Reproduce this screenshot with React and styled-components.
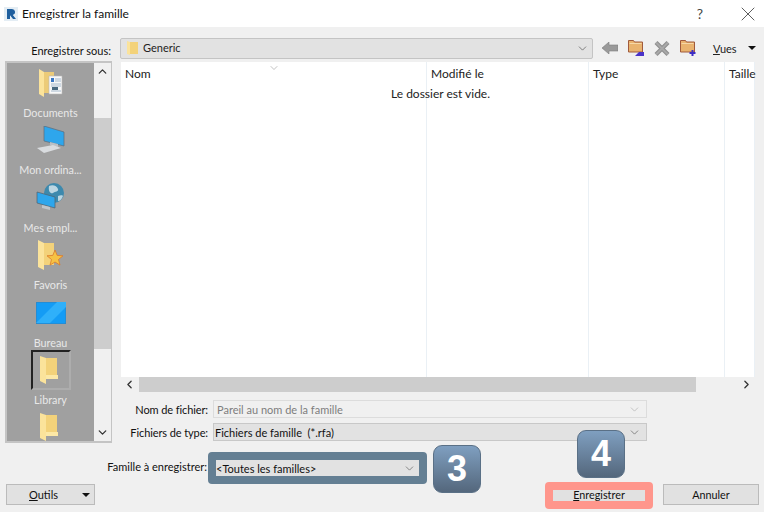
import React from 'react';
import styled, { createGlobalStyle } from 'styled-components';
import { ChevronDown, ChevronUp, ChevronLeft, ChevronRight, X } from 'lucide-react';

const GlobalStyle = createGlobalStyle`
  html, body {
    margin: 0;
    padding: 0;
    width: 764px;
    height: 512px;
    overflow: hidden;
    background: #f0f0f0;
  }
  * {
    box-sizing: border-box;
  }
`;
const Dialog = styled.div`
  position: relative;
  width: 764px;
  height: 512px;
  overflow: hidden;
  background: #f0f0f0;
  color: #111;
  font-family: 'Lato', 'Liberation Sans', sans-serif;
  font-size: 11px;
`;
const TitleBar = styled.div`
  display: flex;
  align-items: center;
  height: 27px;
  padding: 0 4px 0 4px;
  background: #fff;
  font-size: 12px;
`;
const TitleText = styled.div`
  margin-left: 4px;
  flex: 1;
`;
const HelpMark = styled.div`
  width: 14px;
  margin-right: 29px;
  color: #444;
  font-size: 14px;
  text-align: center;
`;
const ToolRow = styled.div`
  display: flex;
  align-items: center;
  height: 34px;
  padding-top: 8px;
`;
const SaveLabel = styled.div`
  width: 111px;
  padding-top: 4px;
  text-align: right;
`;
const PathCombo = styled.div`
  display: flex;
  align-items: center;
  width: 473px;
  height: 21px;
  margin-left: 9px;
  padding: 0 3px 0 6px;
  background: #e2e2e2;
  border: 1px solid #c4c4c4;
  border-radius: 2px;
  > span {
    flex: 1;
    margin-left: 5px;
    margin-top: -2px;
    color: #222;
  }
`;
const ToolIcons = styled.div`
  display: flex;
  align-items: center;
  gap: 10px;
  margin-left: 9px;
`;
const ViewsButton = styled.div`
  margin-left: 17px;
  width: 22px;
  color: #222;
`;
const Key = styled.span`
  text-decoration: underline;
`;
const MenuArrow = styled.div`
  width: 0;
  height: 0;
  margin-left: ${(p) => p.$left || 0}px;
  border-left: 4px solid transparent;
  border-right: 4px solid transparent;
  border-top: 4px solid #111;
`;
const Middle = styled.div`
  display: flex;
  height: 384px;
  padding-left: 5px;
`;
const Sidebar = styled.div`
  display: flex;
  width: 107px;
  height: 382px;
  border: 2px solid #c4c4c4;
  border-right-width: 1px;
  background: #f0f0f0;
`;
const Places = styled.div`
  flex: 1;
  height: 100%;
  overflow: hidden;
  background: #a0a0a0;
`;
const Place = styled.div`
  display: flex;
  flex-direction: column;
  align-items: center;
  height: 57.4px;
  padding-top: ${(p) => p.$top || 5}px;
  color: #e8e8e8;
  font-size: 10.8px;
  > span {
    margin-top: ${(p) => p.$gap || 8}px;
    line-height: 14px;
    white-space: nowrap;
  }
`;
const IconSlot = styled.div`
  display: flex;
  align-items: center;
  justify-content: center;
  width: 40px;
  height: 30px;
  flex: none;
`;
const SelectedSlot = styled(IconSlot)`
  height: 40px;
  margin-top: -4px;
  padding-right: 4px;
  border: 2px solid #adadad;
  border-top-color: #222;
  border-left-color: #222;
`;
const LastSlot = styled(IconSlot)`
  padding-right: 4px;
`;
const VScroll = styled.div`
  display: flex;
  flex-direction: column;
  width: 17px;
  background: #f0f0f0;
`;
const ScrollButton = styled.div`
  display: flex;
  align-items: center;
  justify-content: center;
  flex: none;
  width: 17px;
  height: 17px;
  color: #333;
`;
const VThumb = styled.div`
  height: 231px;
  margin-top: 38px;
  background: #cdcdcd;
`;
const Spring = styled.div`
  flex: 1;
`;
const RightPane = styled.div`
  width: 634px;
  margin-left: 9px;
  padding-top: 1px;
`;
const ListView = styled.div`
  position: relative;
  display: flex;
  height: 315px;
  background: #fff;
  font-size: 12px;
`;
const Column = styled.div`
  width: ${(p) => p.$width}px;
  padding: 4px 4px;
  border-right: 1px solid #eaf0f5;
  color: #222;
  white-space: nowrap;
  &:last-of-type {
    border-right: 0;
  }
`;
const SortMark = styled.div`
  position: absolute;
  left: 147px;
  top: 0;
  color: #999;
  line-height: 0;
`;
const EmptyNote = styled.div`
  position: absolute;
  left: 270px;
  top: 24px;
  color: #222;
`;
const HScroll = styled.div`
  display: flex;
  align-items: center;
  height: 15px;
  background: #f0f0f0;
`;
const HThumb = styled.div`
  width: 557px;
  height: 15px;
  margin-left: 1px;
  background: #cdcdcd;
`;
const Fields = styled.div`
  display: flex;
  flex-direction: column;
  gap: 5px;
  margin-top: 8px;
`;
const FieldRow = styled.div`
  display: flex;
  align-items: center;
  height: 18px;
`;
const FieldLabel = styled.div`
  width: 92px;
  padding-right: 5px;
  letter-spacing: -0.1px;
  text-align: right;
  white-space: nowrap;
`;
const FieldBox = styled.div`
  display: flex;
  align-items: center;
  justify-content: space-between;
  width: 434px;
  height: 18px;
  padding: 0 5px 0 ${(p) => (p.$disabled ? 3 : 1)}px;
  border: 1px solid ${(p) => (p.$disabled ? '#dcdcdc' : '#c8c8c8')};
  background: ${(p) => (p.$disabled ? '#f0f0f0' : '#e2e2e2')};
  color: ${(p) => (p.$disabled ? '#7d7d7d' : '#111')};
`;
const Footer = styled.div`
  position: relative;
  display: flex;
  height: 67px;
`;
const OutilsButton = styled.div`
  display: flex;
  align-items: center;
  width: 89px;
  height: 21px;
  margin: 39px 0 0 6px;
  padding-left: 22px;
  background: #e1e1e1;
  border: 1px solid #bbb;
  > span {
    flex: 1;
  }
  > div {
    margin-right: 4px;
  }
`;
const FamilyLabel = styled.div`
  width: 113px;
  padding-top: 15px;
  padding-right: 1px;
  text-align: right;
`;
const FamilyHighlight = styled.div`
  display: flex;
  width: 219px;
  height: 32px;
  margin: 7px 0 0 0;
  padding: 8px;
  background: #647f93;
  border-radius: 4px;
`;
const FamilyCombo = styled.div`
  display: flex;
  align-items: center;
  justify-content: space-between;
  width: 100%;
  height: 16px;
  padding-right: 3px;
  background: #e2e2e2;
`;
const SaveHighlight = styled.div`
  display: flex;
  width: 108px;
  height: 27px;
  margin: 37px 0 0 118px;
  padding: 8px;
  background: #ff968c;
  border-radius: 4px;
`;
const SaveButton = styled.div`
  width: 100%;
  height: 11px;
  background: #e1e1e1;
  font-size: 10.8px;
  line-height: 9px;
  text-align: center;
`;
const CancelButton = styled.div`
  width: 96px;
  height: 21px;
  margin: 39px 0 0 10px;
  background: #e1e1e1;
  border: 1px solid #bbb;
  font-size: 10.8px;
  line-height: 19px;
  text-align: center;
`;
const StepBadge = styled.div`
  position: absolute;
  left: ${(p) => p.$left}px;
  top: ${(p) => p.$top}px;
  width: 48px;
  height: 48px;
  border-radius: 9px;
  background: linear-gradient(#7f9fc0, #54677c);
  border: 1px solid #5a7086;
  color: #fff;
  font-family: 'Liberation Sans', sans-serif;
  font-size: 36px;
  font-weight: 700;
  line-height: 46px;
  text-align: center;
`;

function RevitLogo() {
  return (
    <svg width="14" height="14" viewBox="0 0 14 14">
      <rect width="14" height="14" fill="#e4edf4" />
      <path d="M3 12V2h5a3 3 0 0 1 .8 5.900L12 12H9L6 8.200V12z" fill="#1f5f9e" />
    </svg>
  );
}
function Folder() {
  return (
    <svg width="18" height="28" viewBox="0 0 18 28">
      <path d="M4 2h13v21H4z" fill="#f3d27a" />
      <path d="M0 0l6 2v26l-6-3z" fill="#fbe39b" />
      <path d="M6 19h12v4H6z" fill="#fce8a6" />
    </svg>
  );
}
function DocFolder() {
  return (
    <svg width="24" height="28" viewBox="0 0 24 28">
      <path d="M2 3h13v21H2z" fill="#eccb78" />
      <path d="M0 0l5 3v25l-5-3z" fill="#fbe39b" />
      <path d="M10 7h13v18H10z" fill="#f8f8f8" stroke="#bbb" strokeWidth=".6" />
      <path d="M12 9h3v4h-3z" fill="#3b78c4" />
      <path d="M16 10h6M16 12h6M12 15h10M12 17h10M12 22h10" stroke="#8fa8c0" strokeWidth=".8" />
      <path d="M13 18h6v3h-6z" fill="#4a6a80" />
    </svg>
  );
}
function Computer() {
  return (
    <svg width="30" height="28" viewBox="0 0 30 28">
      <path d="M8 0l20 6v14L8 15z" fill="#2ea6ec" stroke="#5d6b78" strokeWidth=".7" />
      <path d="M14 16l8 2v3l-8-2z" fill="#b9c0c6" />
      <path d="M1 22l16-3 8 3-17 5z" fill="#d9dcdf" />
    </svg>
  );
}
function NetworkComputer() {
  return (
    <svg width="30" height="30" viewBox="0 0 30 30">
      <circle cx="18" cy="10" r="10" fill="#3d89ad" />
      <path d="M13 3c4-2 8 0 9 3 1 3-3 2-5 4-2 1-5-1-4-7zM22 13c2-1 5-1 5 0-1 3-3 5-5 5z" fill="#bcd6e2" />
      <path d="M1 9l18 5v11L1 20z" fill="#2ea6ec" stroke="#52606c" strokeWidth=".7" />
      <path d="M6 22l8 2v3l-8-2z" fill="#c0c5ca" />
    </svg>
  );
}
function StarFolder() {
  return (
    <svg width="26" height="30" viewBox="0 0 26 30">
      <path d="M3 3h13v22H3z" fill="#f3d27a" />
      <path d="M0 0l6 3v27l-6-3z" fill="#fbe39b" />
      <path d="M17 10l2.200 5.400 5.800.4-4.500 3.700 1.500 5.600-5-3.100-5 3.100 1.500-5.600L9 15.800l5.800-.4z" fill="#f6c244" stroke="#dc7a28" strokeWidth=".8" />
    </svg>
  );
}
function Desktop() {
  return (
    <svg width="30" height="22" viewBox="0 0 30 22">
      <rect width="30" height="22" rx="1" fill="#149cf5" stroke="#3a78a8" strokeWidth=".8" />
      <path d="M0 21L21 0h9v5L14 21z" fill="#2fb0fa" />
    </svg>
  );
}
function SmallFolder() {
  return (
    <svg width="11" height="14" viewBox="0 0 11 14">
      <path d="M3 1h8v12H3z" fill="#f3d27a" />
      <path d="M0 0l3 1v13l-3-1z" fill="#fbe39b" />
    </svg>
  );
}
function BackArrow() {
  return (
    <svg width="16" height="12" viewBox="0 0 16 12">
      <path d="M7 0v3h9v6H7v3L0 6z" fill="#9a9a9a" stroke="#7c7c7c" strokeWidth=".6" />
    </svg>
  );
}
function ActionFolder({ kind }) {
  return (
    <svg width="16" height="16" viewBox="0 0 16 16">
      <path d="M.5.5h5l1 1.500h8v10H.5z" fill="#e9b36f" stroke="#a05a3c" />
      <path d="M1.500 3.500h12" stroke="#f6d8a8" />
      {kind === 'up' ? (
        <path d="M7 16l4-4h5v4z" fill="#4a32c8" />
      ) : (
        <path d="M12.500 10v6M9.500 13h6" stroke="#3c2cc4" strokeWidth="2" />
      )}
    </svg>
  );
}
function DeleteCross() {
  return (
    <svg width="16" height="15" viewBox="0 0 16 15">
      <path d="M2 1.500l12 12M14 1.500l-12 12" stroke="#8e8e8e" strokeWidth="4.200" />
      <path d="M2 1.500l12 12M14 1.500l-12 12" stroke="#a8a8a8" strokeWidth="2" />
    </svg>
  );
}

const places = [
  { name: 'Documents', icon: <DocFolder /> },
  { name: 'Mon ordina...', icon: <Computer /> },
  { name: 'Mes empl...', icon: <NetworkComputer /> },
  { name: 'Favoris', icon: <StarFolder /> },
  { name: 'Bureau', icon: <Desktop /> },
];

export default function App() {
  return (
    <Dialog>
      <GlobalStyle />
      <TitleBar>
        <RevitLogo />
        <TitleText>Enregistrer la famille</TitleText>
        <HelpMark>?</HelpMark>
        <X size={24} strokeWidth={0.8} color="#333" />
      </TitleBar>
      <ToolRow>
        <SaveLabel>Enregistrer sous:</SaveLabel>
        <PathCombo>
          <SmallFolder />
          <span>Generic</span>
          <ChevronDown size={13} strokeWidth={1.3} color="#555" />
        </PathCombo>
        <ToolIcons>
          <BackArrow />
          <ActionFolder kind="up" />
          <DeleteCross />
          <ActionFolder kind="new" />
        </ToolIcons>
        <ViewsButton>
          <Key>V</Key>ues
        </ViewsButton>
        <MenuArrow $left={13} />
      </ToolRow>
      <Middle>
        <Sidebar>
          <Places>
            {places.map((p) => (
              <Place key={p.name}>
                <IconSlot>{p.icon}</IconSlot>
                <span>{p.name}</span>
              </Place>
            ))}
            <Place $top={4} $gap={3}>
              <SelectedSlot>
                <Folder />
              </SelectedSlot>
              <span>Library</span>
            </Place>
            <Place>
              <LastSlot>
                <Folder />
              </LastSlot>
            </Place>
          </Places>
          <VScroll>
            <ScrollButton>
              <ChevronUp size={13} strokeWidth={2.4} />
            </ScrollButton>
            <VThumb />
            <Spring />
            <ScrollButton>
              <ChevronDown size={13} strokeWidth={2.4} />
            </ScrollButton>
          </VScroll>
        </Sidebar>
        <RightPane>
          <ListView>
            <Column $width={306}>Nom</Column>
            <Column $width={162}>Modifié le</Column>
            <Column $width={136}>Type</Column>
            <Column $width={30}>Taille</Column>
            <SortMark>
              <ChevronDown size={12} strokeWidth={1.2} />
            </SortMark>
            <EmptyNote>Le dossier est vide.</EmptyNote>
          </ListView>
          <HScroll>
            <ScrollButton>
              <ChevronLeft size={13} strokeWidth={2.4} />
            </ScrollButton>
            <HThumb />
            <Spring />
            <ScrollButton>
              <ChevronRight size={13} strokeWidth={2.4} />
            </ScrollButton>
          </HScroll>
          <Fields>
            <FieldRow>
              <FieldLabel>Nom de fichier:</FieldLabel>
              <FieldBox $disabled>
                Pareil au nom de la famille
                <ChevronDown size={13} strokeWidth={1.2} color="#aaa" />
              </FieldBox>
            </FieldRow>
            <FieldRow>
              <FieldLabel>Fichiers de type:</FieldLabel>
              <FieldBox>
                Fichiers de famille&nbsp; (*.rfa)
                <ChevronDown size={13} strokeWidth={1.2} color="#555" />
              </FieldBox>
            </FieldRow>
          </Fields>
        </RightPane>
      </Middle>
      <Footer>
        <OutilsButton>
          <span>
            <Key>O</Key>utils
          </span>
          <MenuArrow />
        </OutilsButton>
        <FamilyLabel>Famille à enregistrer:</FamilyLabel>
        <FamilyHighlight>
          <FamilyCombo>
            &lt;Toutes les familles&gt;
            <ChevronDown size={13} strokeWidth={1.2} color="#555" />
          </FamilyCombo>
        </FamilyHighlight>
        <SaveHighlight>
          <SaveButton>
            <Key>E</Key>nregistrer
          </SaveButton>
        </SaveHighlight>
        <CancelButton>Annuler</CancelButton>
        <StepBadge $left={433} $top={0}>3</StepBadge>
        <StepBadge $left={577} $top={-15}>4</StepBadge>
      </Footer>
    </Dialog>
  );
}
